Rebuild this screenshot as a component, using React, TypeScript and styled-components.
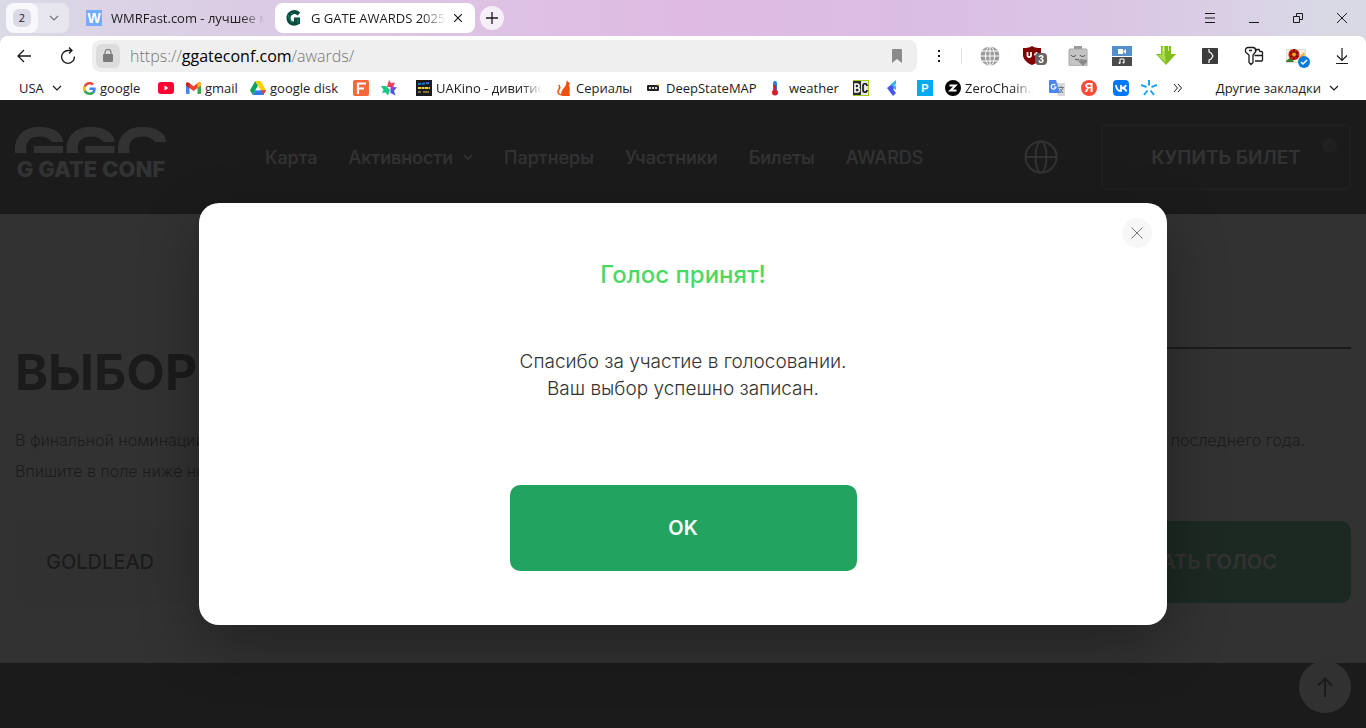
import React from "react";
import styled, { createGlobalStyle, css } from "styled-components";

const GlobalStyle = createGlobalStyle`
  *, *::before, *::after { box-sizing: border-box; }
  body { margin: 0; font-family: "Inter", "Liberation Sans", sans-serif; color: #1c1c1c; }
  button, input { font: inherit; color: inherit; }
  button { border: 0; padding: 0; background: none; cursor: pointer; }
  a { color: inherit; text-decoration: none; }
  h1, h2, p { margin: 0; }
  svg { display: block; flex: none; }
`;

const Page = styled.div`
  display: flex;
  flex-direction: column;
  min-height: 100vh;
`;

/* ---------- browser window ---------- */

const Chrome = styled.div`
  font-family: "Open Sans", "Noto Sans", sans-serif;
  font-size: 13px;
  background: linear-gradient(90deg, #dad9e6 0%, #dcc8e4 24%, #dfbbe3 50%, #dbbee4 68%, #dac8e4 84%, #d9d9e6 97%);
`;

const TabStrip = styled.div`
  display: flex;
  align-items: center;
  height: 36px;
  padding: 0 2px 0 6px;
`;

const TabGroup = styled.div`
  display: flex;
  align-items: center;
  width: 63px;
  height: 30px;
  margin-right: 6px;
  border-radius: 8px;
  background: #e7e5ee;
`;

const GroupCount = styled.button`
  display: grid;
  place-items: center;
  width: 32px;
  height: 30px;
  border-radius: 8px;
  background: #f8f7fb;
  font-size: 11px;

  span {
    width: 18px;
    border-radius: 6px;
    background: #dbd9e6;
    line-height: 18px;
  }
`;

const GroupToggle = styled.button`
  display: grid;
  place-items: center;
  flex: 1;
  height: 30px;
`;

const Tab = styled.div<{ $active?: boolean }>`
  display: flex;
  align-items: center;
  gap: 9px;
  width: 200px;
  height: 30px;
  padding: 0 10px 0 11px;
  border-radius: 8px;
  background: ${(p) => (p.$active ? "#fff" : "transparent")};
`;

const FadedText = styled.span`
  flex: 1;
  min-width: 0;
  overflow: hidden;
  white-space: nowrap;
  mask-image: linear-gradient(90deg, #000 calc(100% - 24px), transparent);
`;

const CloseTab = styled.button`
  display: grid;
  place-items: center;
  width: 14px;
  height: 20px;
  margin-left: -4px;
`;

const NewTab = styled.button`
  display: grid;
  place-items: center;
  width: 24px;
  height: 24px;
  margin-left: 5px;
  border-radius: 50%;
  background: #f6eff9;
`;

const Spacer = styled.div`
  flex: 1;
`;

const Slot = styled.button`
  display: grid;
  place-items: center;
  width: 44px;
  height: 36px;
  flex: none;
`;

const Panel = styled.div`
  border-radius: 8px 8px 0 0;
  background: #fff;
`;

const Toolbar = styled.div`
  display: flex;
  align-items: center;
  height: 40px;
  padding: 0 2px;
`;

const AddressBar = styled.div`
  display: flex;
  align-items: center;
  flex: 1;
  min-width: 0;
  height: 32px;
  margin-left: 2px;
  padding: 0 14px 0 4px;
  border-radius: 8px;
  background: #efefef;
  font-size: 16px;
`;

const SiteLock = styled.button`
  display: grid;
  place-items: center;
  width: 24px;
  height: 24px;
  margin-right: 10px;
  border-radius: 6px;
  background: #dcdcdc;
`;

const Url = styled.div`
  flex: 1;
  color: #777;
  font-weight: 300;

  b {
    color: #000;
    font-weight: 400;
  }
`;

const Divider = styled.div`
  width: 1px;
  height: 16px;
  margin-right: 6px;
  background: #dedede;
`;

const Bookmarks = styled.nav`
  display: flex;
  align-items: center;
  height: 24px;
  padding: 0 27px 0 19px;
`;

const Bookmark = styled.a<{ $width: number }>`
  display: flex;
  align-items: center;
  gap: 4px;
  flex: none;
  width: ${(p) => p.$width}px;
  height: 24px;
  white-space: nowrap;
`;

const BookmarkLabel = styled.span<{ $limit?: number }>`
  ${(p) =>
    p.$limit &&
    css`
      width: ${p.$limit}px;
      overflow: hidden;
      mask-image: linear-gradient(90deg, #000 calc(100% - 20px), transparent);
    `}
`;

const FolderButton = styled.button<{ $width?: number }>`
  display: flex;
  align-items: center;
  gap: 8px;
  width: ${(p) => (p.$width ? `${p.$width}px` : "auto")};
  white-space: nowrap;
`;

/* ---------- site ---------- */

const Site = styled.div`
  position: relative;
  display: flex;
  flex-direction: column;
  flex: 1;
  background: #1c1c1c;
`;

const Header = styled.header`
  display: flex;
  align-items: center;
  padding: 24px 15px;
  color: #fff;
`;

const Logo = styled.a`
  display: flex;
  flex-direction: column;
  gap: 6px;
  width: 152px;
  margin-right: 98px;
  padding-bottom: 8px;
  font-size: 22px;
  font-weight: 800;
  line-height: 20px;
  text-align: center;
  white-space: nowrap;
`;

const Menu = styled.nav`
  display: flex;
  gap: 31px;
  flex: 1;
  font-size: 18px;
  font-weight: 500;
`;

const MenuLink = styled.a`
  display: flex;
  align-items: center;
  gap: 10px;
`;

const Language = styled.button`
  margin-right: 43px;
`;

const BuyTicket = styled.button`
  position: relative;
  width: 250px;
  height: 66px;
  border: 2px solid #424242;
  border-radius: 6px;
  font-size: 19px;
  font-weight: 600;

  &::after {
    content: "";
    position: absolute;
    top: 12px;
    right: 12px;
    width: 15px;
    height: 15px;
    border-radius: 50%;
    background: #4c4c4c;
  }
`;

const Main = styled.main`
  padding: 126px 15px 60px;
  background: #fff;
`;

const Heading = styled.div`
  display: flex;
  gap: 30px;

  &::after {
    content: "";
    flex: 1;
    height: 2px;
    margin-top: 7px;
    background: #1c1c1c;
  }
`;

const Title = styled.h1`
  font-size: 50px;
  font-weight: 700;
  line-height: 64px;
`;

const Intro = styled.div`
  padding: 21px 0 34px;
  font-size: 16px;
  font-weight: 300;
  line-height: 31px;
`;

const IntroLine = styled.p`
  display: flex;
  justify-content: space-between;
  padding-right: 46px;
`;

const VoteForm = styled.form`
  display: flex;
  gap: 30px;
`;

const VoteInput = styled.input`
  flex: 1;
  min-width: 0;
  height: 82px;
  padding: 0 31px;
  border: 0;
  border-radius: 10px;
  background: #f6f6f6;
  font-size: 20px;
  font-weight: 500;
`;

const GreenButton = styled.button<{ $width: number; $height: number }>`
  width: ${(p) => p.$width}px;
  height: ${(p) => p.$height}px;
  border-radius: 10px;
  background: #22a360;
  color: #fff;
  font-size: 20px;
  font-weight: 600;
`;

const ToTop = styled.a`
  position: absolute;
  right: 15px;
  bottom: 15px;
  display: grid;
  place-items: center;
  width: 52px;
  height: 52px;
  border-radius: 50%;
  background: #f4f4f4;
`;

const Overlay = styled.div`
  position: absolute;
  inset: 0;
  display: grid;
  place-items: center;
  background: rgba(28, 28, 28, 0.9);
`;

const Dialog = styled.section`
  position: relative;
  display: flex;
  flex-direction: column;
  align-items: center;
  width: 100%;
  max-width: 968px;
  padding: 54px 30px;
  border-radius: 20px;
  background: #fff;
  box-shadow: 0 20px 60px rgba(0, 0, 0, 0.32);
  text-align: center;
`;

const DialogTitle = styled.h2`
  color: #4bd964;
  font-size: 24px;
  font-weight: 500;
  line-height: 36px;
`;

const DialogText = styled.p`
  padding: 55px 0 83px;
  color: #333;
  font-size: 19px;
  font-weight: 300;
  line-height: 27px;
`;

const DialogClose = styled.button`
  position: absolute;
  top: 15px;
  right: 15px;
  display: grid;
  place-items: center;
  width: 30px;
  height: 30px;
  border-radius: 50%;
  background: #f7f7f7;
`;

/* ---------- icons ---------- */

const Line = ({ w, h, d, color = "#1a1a1a", sw = 1 }: { w: number; h: number; d: string; color?: string; sw?: number }) => (
  <svg width={w} height={h} viewBox={`0 0 ${w} ${h}`} fill="none" stroke={color} strokeWidth={sw}>
    <path d={d} />
  </svg>
);

const Chevron = ({ color = "#1a1a1a", sw = 1.2 }: { color?: string; sw?: number }) => (
  <Line w={10} h={6} d="M1 1l4 4 4-4" color={color} sw={sw} />
);

const Icon16 = ({ children }: { children: React.ReactNode }) => (
  <svg width="16" height="16" viewBox="0 0 16 16">
    {children}
  </svg>
);

const letter = (size: number, fill = "#fff") => ({
  fontFamily: "Liberation Sans, sans-serif",
  fontWeight: 700,
  fontSize: size,
  fill,
  textAnchor: "middle" as const,
});

const icons = {
  wmr: (
    <Icon16>
      <path fill="#75aaff" d="M0 0h16v16H0z" />
      <text x="8" y="13" {...letter(14)}>W</text>
    </Icon16>
  ),
  gate: (
    <Icon16>
      <path fill="none" stroke="#0b4a3e" strokeWidth="4" d="M13 4C8 0 2.500 3 2.500 8s5 7 9.500 4.500V9.500H8" />
      <path fill="none" stroke="#17966f" strokeWidth="1" d="M2 5l4 8M5 3l2 2M12 9v4" />
    </Icon16>
  ),
  google: (
    <svg width="13" height="13" viewBox="0 0 24 24">
      <path fill="#4285F4" d="M23.500 12.300c0-.9-.1-1.500-.2-2.200H12v4.600h6.500c-.1 1.100-.8 2.800-2.400 3.900l3.700 2.900c2.300-2.100 3.700-5.200 3.700-9.200z" />
      <path fill="#34A853" d="M12 24c3.200 0 6-1.100 8-2.900l-3.900-2.900c-1 .7-2.400 1.200-4.100 1.200-3.200 0-5.800-2.100-6.800-5l-3.900 3C3.300 21.300 7.300 24 12 24z" />
      <path fill="#FBBC05" d="M5.200 14.400a7.400 7.400 0 010-4.700l-4-3a12 12 0 000 10.700z" />
      <path fill="#EA4335" d="M12 4.700c2.300 0 3.800 1 4.700 1.800L20 3.100C18 1.200 15.200 0 12 0 7.300 0 3.300 2.700 1.300 6.700l4 3c.9-2.900 3.500-5 6.700-5z" />
    </svg>
  ),
  youtube: (
    <svg width="16" height="12" viewBox="0 0 16 12">
      <rect width="16" height="12" rx="3" fill="#f03" />
      <path fill="#fff" d="M6.500 3.500v5l4-2.500z" />
    </svg>
  ),
  gmail: (
    <svg width="15" height="12" viewBox="0 0 15 12">
      <path fill="#4285f4" d="M0 2h3.500v10H1a1 1 0 01-1-1z" />
      <path fill="#34a853" d="M11.500 2H15v9a1 1 0 01-1 1h-2.500z" />
      <path fill="#ea4335" d="M0 2C0 0 2 0 3 .800L7.500 4.200 12 .800C13 0 15 0 15 2v1.500L7.500 9 0 3.500z" />
      <path fill="#fbbc04" d="M11.500 1.200C13 0 15 0 15 2v1.500L11.500 6z" />
      <path fill="#c5221f" d="M3.500 1.200C2 0 0 0 0 2v1.500L3.500 6z" />
    </svg>
  ),
  drive: (
    <svg width="16" height="14" viewBox="0 0 16 14">
      <path fill="#0aa55a" d="M5.300 0L0 9.300 2.700 14 8 4.700z" />
      <path fill="#ffcf00" d="M5.300 0h5.400L16 9.300h-5.300z" />
      <path fill="#2a7cf0" d="M2.700 14l2.700-4.700H16L13.300 14z" />
      <path fill="#e94235" d="M10.700 9.300H16L13.300 14z" />
      <path fill="#fff" d="M8 5l2.500 4.300h-5z" />
    </svg>
  ),
  fLetter: (
    <Icon16>
      <rect width="16" height="16" rx="2" fill="#f4683a" />
      <path fill="none" stroke="#fff" strokeWidth="2.200" d="M5 14V3.500h8M5 8.500h6" />
    </Icon16>
  ),
  star: (
    <Icon16>
      <path fill="#f0415b" d="M8 0l2 3 4-.5-2 4.500H6z" />
      <path fill="#4459e8" d="M16 7l-3 4 1.500 4.500-5-2.500V8z" />
      <path fill="#16c784" d="M0 6l5 0 4 4-2 5.500-2.500-3L1 13l1.500-3z" />
      <path fill="#a43bd0" d="M9 6l5 1-3 4z" />
    </Icon16>
  ),
  kino: (
    <Icon16>
      <path fill="#1b1b1b" d="M0 0h16v16H0z" />
      <path stroke="#177bd0" strokeWidth="2" strokeDasharray="3 1" d="M2 4l12-1" />
      <path stroke="#e8d23c" strokeWidth="2" strokeDasharray="3 .5" d="M2 8h12" />
      <path stroke="#80703b" strokeWidth="2" d="M2 12h3M7 12h6" />
    </Icon16>
  ),
  cat: (
    <Icon16>
      <path fill="#f0500f" d="M11 0l1 2 2 1-1 2c1 3 1 5 .5 8l.5 3H6.500C5 16 5 14 5.500 12 6 9 10 7 10 4z" />
      <path fill="none" stroke="#f0500f" strokeWidth="1.500" d="M2.500 5c3 2 .500 4-.5 6-.5 2 1 4 4 3.500" />
    </Icon16>
  ),
  deep: (
    <Icon16>
      <rect y="5" x="1" width="12" height="6" rx="1" fill="#222" />
      <path stroke="#ddd" strokeWidth="2" strokeDasharray="2 1" d="M3 8h8" />
      <path fill="#f7d433" d="M11 4h2v1.500h-2z" />
    </Icon16>
  ),
  thermo: (
    <Icon16>
      <rect x="4" y="1" width="4" height="11" rx="2" fill="#2f7fd8" />
      <path stroke="#d3202a" strokeWidth="2" d="M6 5v8" />
      <circle cx="6" cy="12.500" r="3" fill="#d3202a" />
    </Icon16>
  ),
  bc: (
    <Icon16>
      <path fill="#9fcb1c" d="M0 0h16v16H0z" />
      <path fill="#2b2b2b" d="M0 1h8v14H0z" />
      <path fill="#e4e4e4" d="M8 1h7v14H8z" />
      <path fill="none" stroke="#fff" strokeWidth="1.600" d="M2 4v8h2.500a2 2 0 000-4H2h2a2 2 0 000-4z" />
      <path fill="none" stroke="#111" strokeWidth="1.600" d="M14 6c0-3-4-3-4 0v4c0 3 4 3 4 0" />
    </Icon16>
  ),
  arrowLeft: (
    <Icon16>
      <path fill="#4a55f5" d="M2 8l5-4 4 4-3 1 3 4-3 3z" />
      <path fill="#39b7f2" d="M6 4l5-4v4L8 7zM8 8l3-3v5z" />
    </Icon16>
  ),
  pBlue: (
    <Icon16>
      <path fill="#00aaf5" d="M0 0h16v16H0z" />
      <text x="8" y="12" {...letter(11)}>P</text>
    </Icon16>
  ),
  zero: (
    <Icon16>
      <circle cx="8" cy="8" r="8" fill="#050505" />
      <path fill="none" stroke="#fff" strokeWidth="2" d="M4.500 5.500h6l-5 5h6" />
    </Icon16>
  ),
  translate: (
    <Icon16>
      <path fill="#d6d8db" d="M6 3h9a1 1 0 011 1v12H9z" />
      <path fill="#4b86ee" d="M1 0h6l4 13H1a1 1 0 01-1-1V1a1 1 0 011-1z" />
      <path fill="none" stroke="#70787f" d="M9.500 7.500H15M12 6v1.500M14 8l-3 5M11 9l3 4" />
      <path fill="none" stroke="#fff" strokeWidth="1.200" d="M6.300 5A2.400 2.400 0 107 7H4.800" />
    </Icon16>
  ),
  yandex: (
    <Icon16>
      <circle cx="8" cy="8" r="8" fill="#fb4a36" />
      <text x="8" y="12" {...letter(12)}>Я</text>
    </Icon16>
  ),
  vk: (
    <Icon16>
      <rect width="16" height="16" rx="4" fill="#07f" />
      <path fill="none" stroke="#fff" strokeWidth="1.800" d="M3 5c.3 4 2 6 5 6V5M13 5c-.5 2-2 3-4.500 3C11 8 12.500 9 13.500 11.500" />
    </Icon16>
  ),
  spark: (
    <Icon16>
      <g fill="none" stroke="#1ba4f5" strokeWidth="2">
        <path d="M8 0v5.500M0 5l5.500 2M16 5l-5.500 2M3 15l3.500-4.500M13 15l-3.500-4.500" />
      </g>
    </Icon16>
  ),
};

const extensions: { name: string; icon: React.ReactNode }[] = [
  {
    name: "VPN",
    icon: (
      <svg width="20" height="20" viewBox="0 0 20 20">
        <circle cx="10" cy="10" r="9.500" fill="#999" />
        <g fill="none" stroke="#fff" strokeWidth="1">
          <ellipse cx="10" cy="10" rx="4.500" ry="9.500" />
          <path d="M10 0v20M0 10h20M2 5h16M2 15h16" />
        </g>
      </svg>
    ),
  },
  {
    name: "uBlock",
    icon: (
      <svg width="26" height="22" viewBox="0 0 26 22">
        <path fill="#800000" d="M11 1c3 2 6 2 9 2v7c0 4-4 8-9 10-5-2-9-6-9-10V3c3 0 6 0 9-2z" />
        <path fill="none" stroke="#fff" strokeWidth="1.800" d="M6.500 7v3.500c0 2 3.500 2 3.500 0V7M13 9.500h2.500V7" />
        <rect x="14" y="8" width="12" height="12" rx="4" fill="#666" />
        <text x="20" y="18" {...letter(10)}>3</text>
      </svg>
    ),
  },
  {
    name: "Clipboard",
    icon: (
      <svg width="20" height="20" viewBox="0 0 20 20">
        <path fill="#9a9a9a" d="M6 0h8v4H6z" />
        <rect x="1" y="3" width="18" height="17" rx="1" fill="#c4c4c4" stroke="#a8a8a8" />
        <path fill="none" stroke="#444" d="M3 9c1 2 4 2 5 0M12 9c1 2 4 2 5 0M7 13c2 1 3 1 4 0" />
        <path fill="#8a8a8a" d="M10 15l3-2 6 1v2l-4 4z" />
      </svg>
    ),
  },
  {
    name: "Media",
    icon: (
      <svg width="20" height="20" viewBox="0 0 20 20">
        <path fill="#5590cc" d="M0 0h20v10H0z" />
        <path fill="#4a4a4a" d="M0 11h20v9H0z" />
        <path fill="#fff" d="M6 3h5v5H6zM11 5.500L14 3v5z" />
        <path fill="none" stroke="#fff" d="M8 17v-4h4v3.500" />
        <circle cx="7.500" cy="17" r="1" fill="#fff" />
        <circle cx="11.500" cy="16.500" r="1" fill="#fff" />
      </svg>
    ),
  },
  {
    name: "Savefrom",
    icon: (
      <svg width="20" height="20" viewBox="0 0 20 20">
        <path fill="#82bd20" d="M5 0h10v8h5L10 19 0 8h5z" />
        <path fill="#a9da4b" d="M6 1h3v8l1 8L2 9h4z" />
        <path stroke="#d8edb0" d="M7.500 0v5M12.500 0v5" />
      </svg>
    ),
  },
  {
    name: "Puzzle",
    icon: (
      <svg width="16" height="16" viewBox="0 0 16 16">
        <rect width="16" height="16" rx="1" fill="#3c3c3c" />
        <path fill="none" stroke="#fff" strokeWidth="1.200" d="M7 1v3l2 1 2 3-2 3-2 1v3" />
      </svg>
    ),
  },
  {
    name: "Passwords",
    icon: (
      <svg width="20" height="20" viewBox="0 0 20 20" fill="none" stroke="#1a1a1a" strokeWidth="1.300">
        <path d="M4 1.500h5a2.500 2.500 0 012.500 2.500v2L9 9v7.500L7 18.500l-2-2V9L1.500 6V4A2.500 2.500 0 014 1.500zM5 4.500h3" />
        <path d="M12 5.500v-2h3l1 2h1.500a1 1 0 011 1v7.500a1 1 0 01-1 1H11M10.500 9.500h8" />
      </svg>
    ),
  },
  {
    name: "Profile",
    icon: (
      <svg width="24" height="24" viewBox="0 0 24 24">
        <path fill="#dcdcdc" d="M0 5h20v14H0z" />
        <path fill="#f0f4e2" d="M1 6h18v12H1z" />
        <path fill="#3d7d2b" d="M0 17l5-4 3 5H0z" />
        <circle cx="8" cy="10.500" r="5.500" fill="#c91c0f" />
        <path stroke="#7b0d08" strokeWidth="1.500" d="M4 8l8 5M4 13l8-5M8 5v11" />
        <circle cx="8" cy="10.500" r="2" fill="#efa91c" />
        <path fill="#f0b53a" d="M13 13l5-5 1 3-4 5z" />
        <circle cx="18" cy="18" r="6" fill="#0b7bdb" />
        <path fill="none" stroke="#fff" strokeWidth="1.500" d="M15 18l2 2 4-4" />
      </svg>
    ),
  },
  { name: "Downloads", icon: <Line w={14} h={16} d="M7 0v12M2 7.500l5 5 5-5M1 15.500h12" sw={1.2} /> },
];

const bookmarks: { name: string; icon: React.ReactNode; width: number; text?: string; limit?: number }[] = [
  { name: "google", icon: icons.google, width: 75, text: "google" },
  { name: "YouTube", icon: icons.youtube, width: 28 },
  { name: "gmail", icon: icons.gmail, width: 64, text: "gmail" },
  { name: "google disk", icon: icons.drive, width: 103, text: "google disk" },
  { name: "F", icon: icons.fLetter, width: 28 },
  { name: "Star", icon: icons.star, width: 35 },
  { name: "UAKino", icon: icons.kino, width: 140, text: "UAKino - дивитися", limit: 106 },
  { name: "Сериалы", icon: icons.cat, width: 90, text: "Сериалы" },
  { name: "DeepStateMAP", icon: icons.deep, width: 123, text: "DeepStateMAP" },
  { name: "weather", icon: icons.thermo, width: 84, text: "weather" },
  { name: "BC", icon: icons.bc, width: 32 },
  { name: "Arrow", icon: icons.arrowLeft, width: 32 },
  { name: "P", icon: icons.pBlue, width: 28 },
  { name: "ZeroChain", icon: icons.zero, width: 104, text: "ZeroChain.info", limit: 68 },
  { name: "Translate", icon: icons.translate, width: 32 },
  { name: "Яндекс", icon: icons.yandex, width: 32 },
  { name: "VK", icon: icons.vk, width: 28 },
  { name: "Spark", icon: icons.spark, width: 32 },
];

const menu = ["Карта", "Активности", "Партнеры", "Участники", "Билеты", "AWARDS"];

const ARCH = "M0 26v-3C0 8 10 0 24 0c14 0 24 6 24 15H37c-3-4-7-5.500-13-5.500-8 0-13 4.500-13 12.500l.8 4z";

export default function App() {
  return (
    <Page>
      <GlobalStyle />
      <Chrome>
        <TabStrip>
          <TabGroup>
            <GroupCount><span>2</span></GroupCount>
            <GroupToggle aria-label="Группа вкладок"><Chevron color="#777" /></GroupToggle>
          </TabGroup>
          <Tab>
            {icons.wmr}
            <FadedText>WMRFast.com - лучшее место</FadedText>
          </Tab>
          <Tab $active>
            {icons.gate}
            <FadedText>G GATE AWARDS 2025</FadedText>
            <CloseTab aria-label="Закрыть вкладку"><Line w={8} h={8} d="M0 0l8 8M8 0L0 8" sw={1.2} /></CloseTab>
          </Tab>
          <NewTab aria-label="Новая вкладка"><Line w={12} h={12} d="M6 0v12M0 6h12" sw={1.3} /></NewTab>
          <Spacer />
          <Slot aria-label="Меню"><Line w={10} h={10} d="M0 .5h10M0 5h10M0 9.500h10" /></Slot>
          <Slot aria-label="Свернуть"><Line w={10} h={10} d="M0 9.500h10" /></Slot>
          <Slot aria-label="Окно"><Line w={10} h={10} d="M.5 3.500h6v6h-6zM3.500 3.500v-3h6v6h-3" /></Slot>
          <Slot aria-label="Закрыть"><Line w={10} h={10} d="M0 0l10 10M10 0L0 10" /></Slot>
        </TabStrip>
        <Panel>
          <Toolbar>
            <Slot aria-label="Назад"><Line w={14} h={14} d="M14 7H1M7 1L1 7l6 6" sw={1.3} /></Slot>
            <Slot aria-label="Обновить"><Line w={14} h={18} d="M13.400 9.500a6.400 6.400 0 11-6.400-6H11M8 .5l3 3-3 3" sw={1.3} /></Slot>
            <AddressBar>
              <SiteLock aria-label="Защищено">
                <svg width="12" height="14" viewBox="0 0 12 14">
                  <rect x="1" y="5" width="10" height="8" rx="1" fill="#7b7b7b" />
                  <path fill="none" stroke="#7b7b7b" strokeWidth="1.200" d="M3 6V3.500a3 3 0 016 0V6" />
                </svg>
              </SiteLock>
              <Url>https://<b>ggateconf.com</b>/awards/</Url>
              <svg width="12" height="14" viewBox="0 0 12 14"><path fill="#8b8b8b" d="M2 0h8a1 1 0 011 1v13l-5-4-5 4V1a1 1 0 011-1z" /></svg>
            </AddressBar>
            <Slot aria-label="Ещё">
              <svg width="2" height="12" viewBox="0 0 2 12"><path fill="#1a1a1a" d="M0 0h2v2H0zM0 5h2v2H0zM0 10h2v2H0z" /></svg>
            </Slot>
            <Divider />
            {extensions.map((e) => (
              <Slot key={e.name} aria-label={e.name}>{e.icon}</Slot>
            ))}
          </Toolbar>
          <Bookmarks>
            <FolderButton $width={64}>USA <Chevron /></FolderButton>
            {bookmarks.map((b) => (
              <Bookmark key={b.name} href="#" aria-label={b.name} $width={b.width}>
                {b.icon}
                {b.text && <BookmarkLabel $limit={b.limit}>{b.text}</BookmarkLabel>}
              </Bookmark>
            ))}
            <FolderButton aria-label="Показать ещё"><Line w={9} h={8} d="M1 0l3.500 4L1 8M5 0l3.500 4L5 8" /></FolderButton>
            <Spacer />
            <FolderButton>Другие закладки <Chevron /></FolderButton>
          </Bookmarks>
        </Panel>
      </Chrome>

      <Site>
        <Header>
          <Logo href="#">
            <svg width="151" height="26" viewBox="0 0 151 26" fill="#fff">
              <path d={ARCH} />
              <path d="M19 19h29v7H19zM70.500 19h29v7h-29z" />
              <path d={ARCH} transform="translate(51.500)" />
              <path d={ARCH} transform="translate(103)" />
            </svg>
            G GATE CONF
          </Logo>
          <Menu>
            {menu.map((m) => (
              <MenuLink key={m} href="#">
                {m}
                {m === "Активности" && <Chevron color="#fff" sw={1.6} />}
              </MenuLink>
            ))}
          </Menu>
          <Language aria-label="Язык">
            <svg width="34" height="34" viewBox="0 0 34 34" fill="none" stroke="#fff" strokeWidth="2">
              <circle cx="17" cy="17" r="15.500" />
              <ellipse cx="17" cy="17" rx="5.500" ry="15.500" />
              <path d="M1.500 17h31" />
            </svg>
          </Language>
          <BuyTicket>КУПИТЬ БИЛЕТ</BuyTicket>
        </Header>
        <Main>
          <Heading><Title>ВЫБОР</Title></Heading>
          <Intro>
            <IntroLine><span>В финальной номинации</span><span>последнего года.</span></IntroLine>
            <IntroLine>Впишите в поле ниже номинанта</IntroLine>
          </Intro>
          <VoteForm onSubmit={(e) => e.preventDefault()}>
            <VoteInput aria-label="Номинант" defaultValue="GOLDLEAD" />
            <GreenButton $width={306} $height={82}>ОТДАТЬ ГОЛОС</GreenButton>
          </VoteForm>
        </Main>
        <ToTop href="#" aria-label="Наверх"><Line w={16} h={20} d="M8 20V2M1 8.500L8 1.500l7 7" color="#1c1c1c" sw={2} /></ToTop>
        <Overlay>
          <Dialog role="dialog" aria-labelledby="dialog-title">
            <DialogClose aria-label="Закрыть окно"><Line w={12} h={12} d="M.5.5l11 11M11.500.5l-11 11" color="#777" /></DialogClose>
            <DialogTitle id="dialog-title">Голос принят!</DialogTitle>
            <DialogText>
              Спасибо за участие в голосовании.<br />
              Ваш выбор успешно записан.
            </DialogText>
            <GreenButton $width={347} $height={86}>OK</GreenButton>
          </Dialog>
        </Overlay>
      </Site>
    </Page>
  );
}
